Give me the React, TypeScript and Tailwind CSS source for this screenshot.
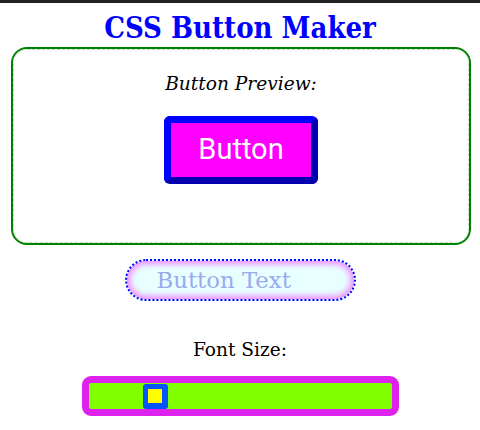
import React from "react";

export default function App() {
  return (
    <div className="w-[480px] h-[430px] bg-white overflow-hidden border-t-[3px] border-[#222222]" style={{ fontFamily: '"DejaVu Serif", serif' }}>
      <h1 className="text-center font-bold text-[#0000ff] text-[29px] leading-[36px] mt-[7px]" style={{ fontFamily: '"DejaVu Serif Condensed", "DejaVu Serif", serif', fontStretch: 'condensed' }}>CSS Button Maker</h1>
      <div className="ml-[11px] mr-[9px] mt-[1px] h-[198px] rounded-[16px] border-2 border-[#008000]">
        <div className="h-full rounded-[14px] border border-dashed border-[#b8dcb8] flex flex-col items-center">
          <p className="italic text-[18.6px] leading-[24px] mt-[22px] text-black">Button Preview:</p>
          <div className="mt-[20px] w-[154px] h-[68px] rounded-[6px] border-[7px] border-t-[#0000ff] border-l-[#0000ff] border-b-[#0000b0] border-r-[#0000b0] bg-[#ff00ff] flex items-center justify-center text-white text-[29px]" style={{ fontFamily: 'Roboto, sans-serif' }}>
            Button
          </div>
        </div>
      </div>
      <div className="flex justify-center mt-[14px]">
        <div className="w-[231px] h-[42px] rounded-full border-2 border-dotted border-[#0000ff] bg-[#e8ffff] shadow-[inset_0_0_6px_3px_#ee88ff] flex items-center pl-[30px]">
          <span className="text-[22.8px] text-[#99aaee]">Button Text</span>
        </div>
      </div>
      <p className="text-center text-[18.6px] leading-[24px] mt-[37px] text-black">Font Size:</p>
      <div className="flex justify-center mt-[14px]">
        <div className="w-[317px] h-[40px] rounded-[9px] border-[7px] border-[#dd22ee] bg-[#7fff00] flex items-center">
          <div className="ml-[54px] w-[25px] h-[25px] rounded-[3px] bg-[#0055ff] flex items-center justify-center">
            <div className="w-[14px] h-[14px] bg-[#ffff00]" />
          </div>
        </div>
      </div>
    </div>
  );
}
